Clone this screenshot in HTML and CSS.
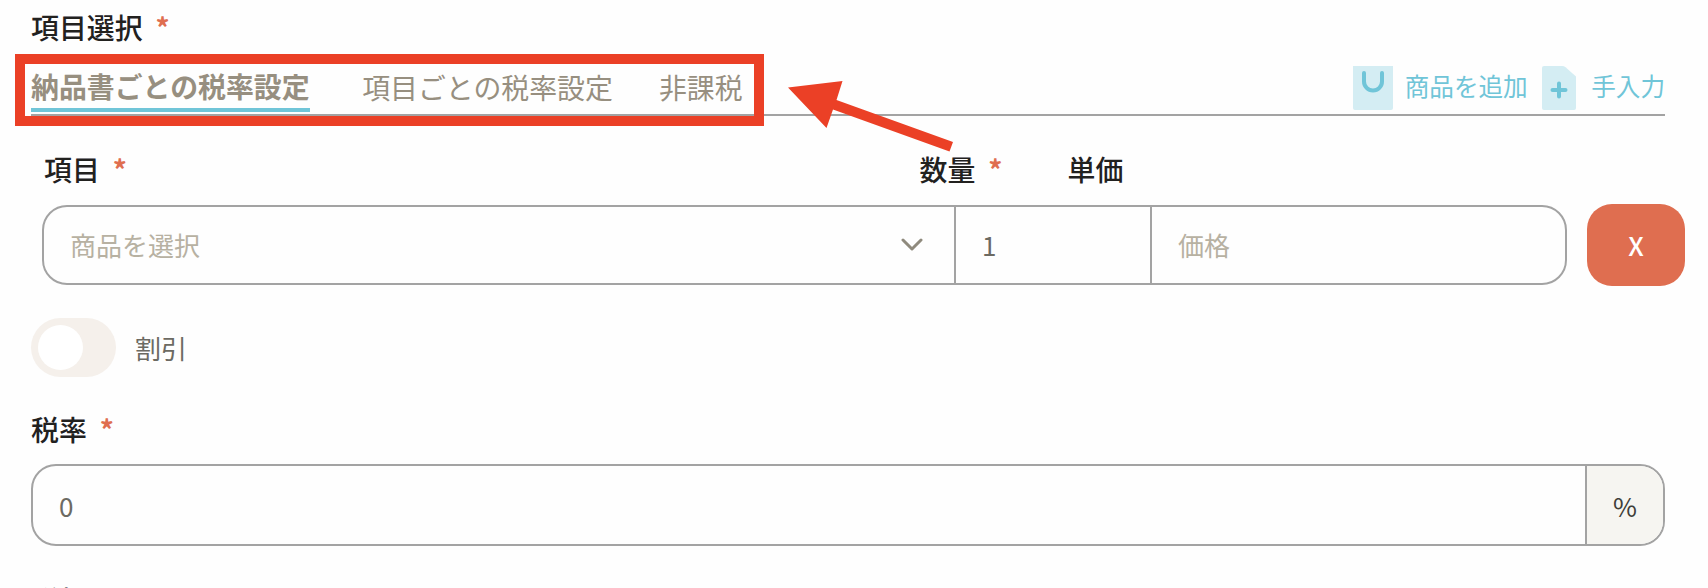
FILE: index.html
```html
<!DOCTYPE html>
<html lang="ja">
<head>
<meta charset="utf-8">
<title>項目選択</title>
<link rel="stylesheet" href="styles.css">
</head>
<body>
<main class="form">
  <div class="label">項目選択<span class="required">*</span></div>
  <div class="tabbar">
    <nav class="tabs">
      <a class="tab active">納品書ごとの税率設定</a>
      <a class="tab">項目ごとの税率設定</a>
      <a class="tab">非課税</a>
    </nav>
    <div class="actions">
      <svg class="icon-bag" width="40" height="44" viewBox="0 0 40 44"><path d="M0 0h40v42a2 2 0 0 1-2 2H2a2 2 0 0 1-2-2z" fill="#d4edf3"/><path d="M11 7v8.500a9 9 0 0 0 18 0V7" fill="none" stroke="#70c5d8" stroke-width="4" stroke-linecap="round"/></svg>
      <span class="action">商品を追加</span>
      <svg class="icon-page" width="34" height="44" viewBox="0 0 34 44"><path d="M2 0h18q2 0 3.500 1.200L34 10.500V42a2 2 0 0 1-2 2H2a2 2 0 0 1-2-2V2a2 2 0 0 1 2-2z" fill="#d4edf3"/><path d="M17 17.500v13M10.500 24h13" stroke="#70c5d8" stroke-width="4" stroke-linecap="round"/></svg>
      <span class="action">手入力</span>
    </div>
    <div class="highlight"></div>
    <svg class="arrow" width="170" height="76" viewBox="0 0 170 76"><path d="M0 14.500L54.500 8L48.500 27L165 69L161.500 78.500L45 36.500L38.500 55Z" fill="#eb4026"/></svg>
  </div>
  <div class="columns">
    <div class="label col-item">項目<span class="required">*</span></div>
    <div class="label col-qty">数量<span class="required">*</span></div>
    <div class="label">単価</div>
  </div>
  <div class="item-row">
    <div class="group">
      <div class="cell select placeholder">商品を選択
        <svg width="22" height="14" viewBox="0 0 22 14"><path d="M2 2l9 9 9-9" fill="none" stroke="#8f8a7d" stroke-width="3" stroke-linecap="round" stroke-linejoin="round"/></svg>
      </div>
      <div class="cell qty">1</div>
      <div class="cell price placeholder">価格</div>
    </div>
    <button class="remove">X</button>
  </div>
  <div class="discount"><span class="switch"></span><span class="switch-label">割引</span></div>
  <div class="label">税率<span class="required">*</span></div>
  <div class="rate"><div class="rate-value">0</div><div class="unit">%</div></div>
  <div class="label next">税額</div>
</main>
</body>
</html>
```
FILE: styles.css
```css
* { box-sizing: border-box; }
body {
  margin: 0;
  height: 588px;
  overflow: hidden;
  background: #fefefe;
  color: #6c6a62;
  font: 26px/38px "Noto Sans CJK JP", sans-serif;
}
.form { height: 588px; overflow: hidden; padding: 8px 23px 0 31px; }
.label { height: 40px; font-size: 27.900px; line-height: 38px; font-weight: 500; color: #22211f; white-space: nowrap; }
.required { margin-left: 13px; font-weight: 700; color: #df6e50; }
.tabbar {
  position: relative;
  display: flex;
  justify-content: space-between;
  width: 1634px;
  height: 68px;
  border-bottom: 2px solid #a3a3a3;
}
.tabs { display: flex; padding-top: 20px; }
.tab { height: 44px; margin-right: 46px; font-size: 27.900px; line-height: 38px; color: #978f80; white-space: nowrap; }
.active { margin-right: 52.500px; font-weight: 700; line-height: 36px; border-bottom: 4px solid #70c5d8; }
.actions { display: flex; align-items: flex-start; padding-top: 18px; }
.action { font-size: 24.600px; line-height: 38px; color: #70c5d8; white-space: nowrap; }
.icon-bag { margin-right: 11.500px; }
.icon-page { margin: 0 15px 0 14.500px; }
.highlight { position: absolute; left: -16px; top: 6px; width: 749px; height: 72px; border: 10px solid #eb4026; }
.arrow { position: absolute; left: 756.500px; top: 24.500px; overflow: visible; }
.columns { display: flex; padding: 34px 0 0 13px; }
.col-item { width: 875.500px; }
.col-qty { width: 148px; }
.item-row { display: flex; align-items: center; margin-top: 14px; padding-left: 11px; height: 82px; gap: 20px; }
.group { display: flex; width: 1525px; height: 80px; border: 2px solid #a3a3a3; border-radius: 25px; }
.cell { display: flex; align-items: center; padding: 0 26px; }
.select { width: 910px; justify-content: space-between; padding-right: 31px; }
.qty { width: 196px; border-left: 2px solid #a3a3a3; }
.price { flex: 1; border-left: 2px solid #a3a3a3; }
.placeholder { color: #b7b1a2; }
.remove { width: 98px; height: 82px; padding: 0; border: 0; border-radius: 25px; background: #df6e50; color: #fff; font: inherit; font-weight: 500; }
.discount { display: flex; align-items: center; gap: 19px; height: 60px; margin-top: 31px; }
.switch { width: 85px; height: 59px; padding: 7px; border-radius: 30px; background: #f5f0eb; }
.switch::before { content: ""; display: block; width: 45px; height: 45px; border-radius: 50%; background: #fff; }
.switch-label { padding-top: 2px; }
.discount + .label { margin-top: 33px; }
.rate { display: flex; width: 1634px; height: 82px; margin-top: 14px; border: 2px solid #a3a3a3; border-radius: 25px; overflow: hidden; }
.rate-value { flex: 1; display: flex; align-items: center; padding: 2px 26px 0; }
.unit { display: flex; align-items: center; justify-content: center; width: 78px; padding-top: 2px; border-left: 2px solid #a3a3a3; background: #f6f5f1; color: #3f3e3a; }
.next { margin-top: 35px; }
```
